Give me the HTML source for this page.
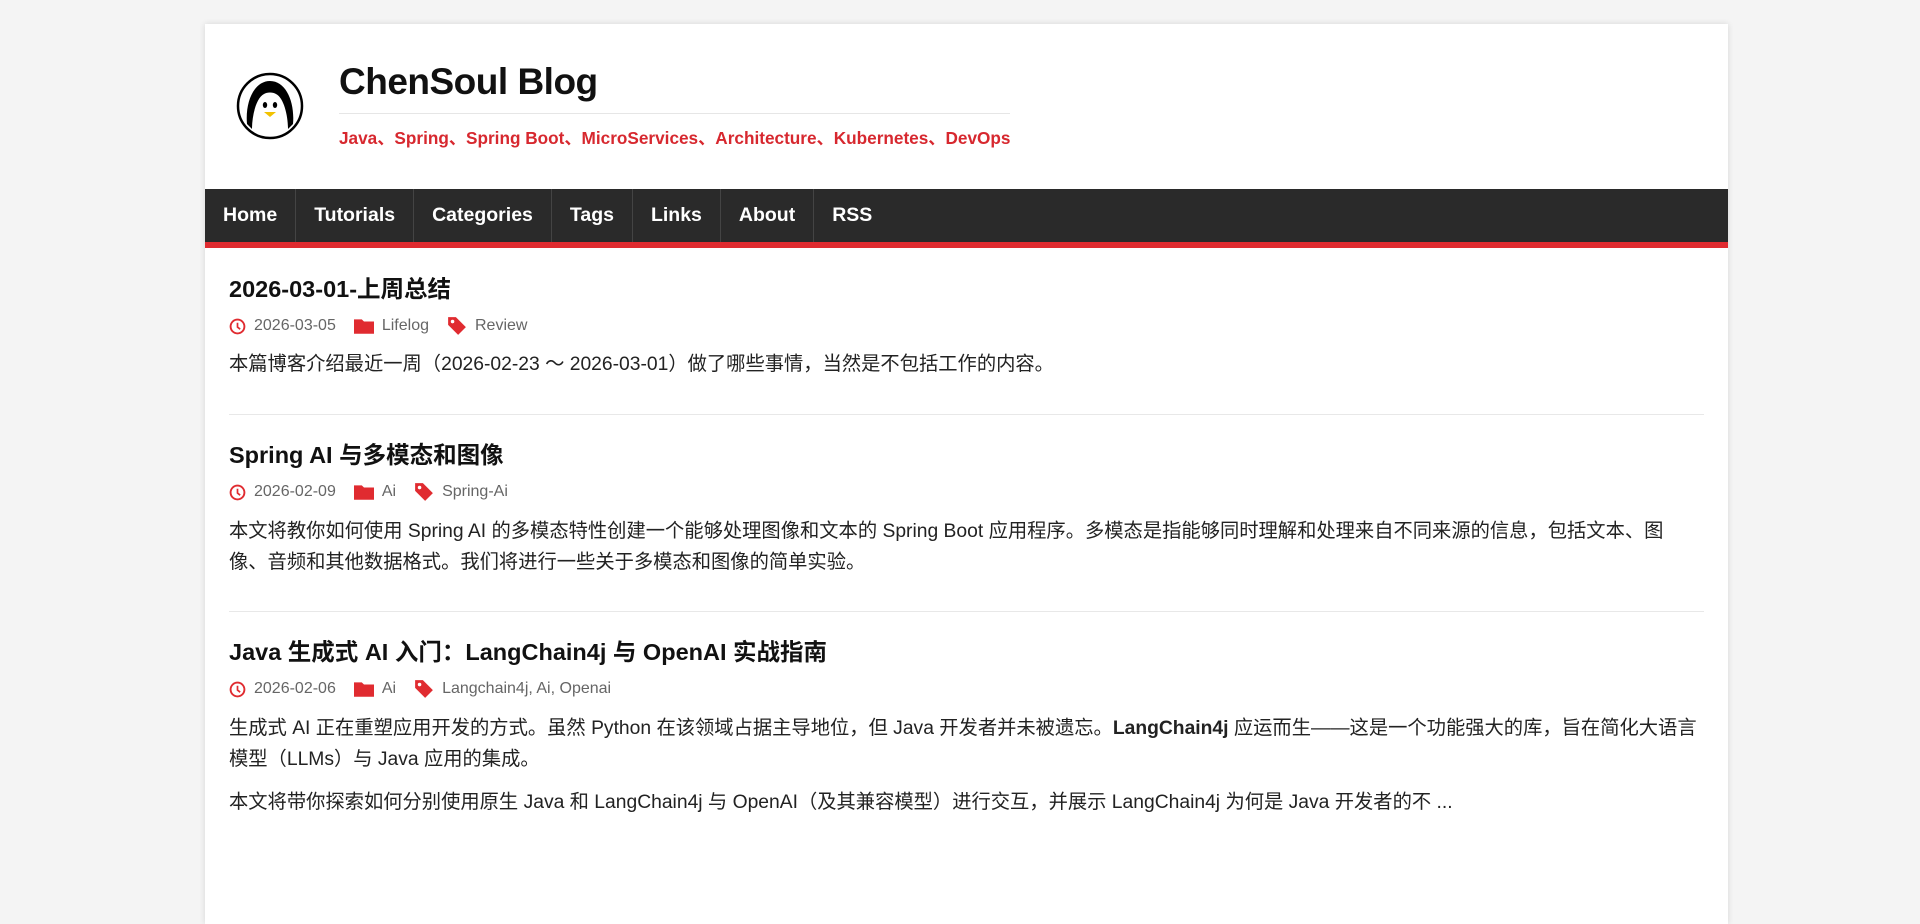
<!DOCTYPE html>
<html><head><meta charset="utf-8"><style>
*{margin:0;padding:0;box-sizing:border-box}
body{background:#f4f4f4;width:1920px;height:848px;overflow:hidden;font-family:"Liberation Sans","Noto Sans CJK SC",sans-serif;color:#111}
.wrap{position:absolute;left:205px;top:24px;width:1523px;height:900px;background:#fff;box-shadow:0 0 6px rgba(0,0,0,.12)}
.logo{position:absolute;left:236px;top:72px}
.title{position:absolute;left:339px;top:61px;font-size:37px;font-weight:bold;letter-spacing:-.5px;color:#111}
.hr{position:absolute;left:339px;top:113px;width:671px;height:1px;background:#e6e6e6}
.sub{position:absolute;left:339px;top:124px;font-size:17.2px;font-weight:bold;color:#d7282f}
.nav{position:absolute;left:205px;top:189px;width:1523px;height:53px;background:#2a2a2a;border-bottom:6px solid #e02b30;box-sizing:content-box;display:flex}
.nav a{color:#fff;font-weight:bold;font-size:19.5px;line-height:53px;padding:0 18px;border-right:1px solid #444;text-decoration:none}
.post{position:absolute;left:229px;width:1480px}
h2{font-size:23.5px;font-weight:bold;color:#111}
.meta{font-size:16px;color:#666;display:flex;align-items:center;margin-top:12px}
.meta svg{margin-right:8px}
.meta span{margin-right:18px}
p{font-size:19.3px;line-height:31px;color:#222;white-space:nowrap}
.line{position:absolute;left:229px;width:1475px;height:1px;background:#e8e8e8}
</style></head><body>
<div class="wrap"></div>
<svg class="logo" width="68" height="68" viewBox="0 0 68 68"><circle cx="34" cy="34" r="32" fill="#fff" stroke="#000" stroke-width="2.5"/>
<path d="M11 52 C9 30 18 9 34 9 C50 9 59 30 57 52 L52 57 C52 44 48 26 40 22 C37 20 31 20 28 22 C20 26 16 44 16 57Z" fill="#000"/>
<ellipse cx="29" cy="33" rx="2.2" ry="3" fill="#000"/><ellipse cx="39" cy="33" rx="2.2" ry="3" fill="#000"/>
<path d="M28 40 L40 40 L34 45Z" fill="#f2c200"/></svg>
<div class="title">ChenSoul Blog</div>
<div class="hr"></div>
<div class="sub">Java、Spring、Spring Boot、MicroServices、Architecture、Kubernetes、DevOps</div>
<div class="nav"><a>Home</a><a>Tutorials</a><a>Categories</a><a>Tags</a><a>Links</a><a>About</a><a style="border:none">RSS</a></div>

<svg width="0" height="0" style="position:absolute"><defs>
<symbol id="clk" viewBox="0 0 16 16"><circle cx="8" cy="8" r="6.5" fill="none" stroke="#e02b30" stroke-width="1.8"/><path d="M8 4.5V8.5L10.5 10.5" fill="none" stroke="#e02b30" stroke-width="1.6"/></symbol>
<symbol id="fld" viewBox="0 0 18 16"><path d="M0 2H7L9 4H18V15H0Z" fill="#e02b30"/></symbol>
<symbol id="tag" viewBox="0 0 18 18"><path d="M1 1H8L17 10L10 17L1 8Z" fill="#e02b30"/><circle cx="5" cy="5" r="1.6" fill="#fff"/></symbol>
</defs></svg>

<div class="post" style="top:270px"><h2>2026-03-01-上周总结</h2>
<div class="meta"><svg width="17" height="17"><use href="#clk"/></svg><span>2026-03-05</span><svg width="20" height="18"><use href="#fld"/></svg><span>Lifelog</span><svg width="20" height="20"><use href="#tag"/></svg><span>Review</span></div>
<p style="margin-top:13px">本篇博客介绍最近一周（2026-02-23 ～ 2026-03-01）做了哪些事情，当然是不包括工作的内容。</p></div>
<div class="line" style="top:414px"></div>

<div class="post" style="top:436px"><h2>Spring AI 与多模态和图像</h2>
<div class="meta"><svg width="17" height="17"><use href="#clk"/></svg><span>2026-02-09</span><svg width="20" height="18"><use href="#fld"/></svg><span>Ai</span><svg width="20" height="20"><use href="#tag"/></svg><span>Spring-Ai</span></div>
<p style="margin-top:14px">本文将教你如何使用 Spring AI 的多模态特性创建一个能够处理图像和文本的 Spring Boot 应用程序。多模态是指能够同时理解和处理来自不同来源的信息，包括文本、图<br>像、音频和其他数据格式。我们将进行一些关于多模态和图像的简单实验。</p></div>
<div class="line" style="top:611px"></div>

<div class="post" style="top:633px"><h2>Java 生成式 AI 入门：LangChain4j 与 OpenAI 实战指南</h2>
<div class="meta"><svg width="17" height="17"><use href="#clk"/></svg><span>2026-02-06</span><svg width="20" height="18"><use href="#fld"/></svg><span>Ai</span><svg width="20" height="20"><use href="#tag"/></svg><span>Langchain4j, Ai, Openai</span></div>
<p style="margin-top:14px">生成式 AI 正在重塑应用开发的方式。虽然 Python 在该领域占据主导地位，但 Java 开发者并未被遗忘。<b>LangChain4j</b> 应运而生——这是一个功能强大的库，旨在简化大语言<br>模型（LLMs）与 Java 应用的集成。</p>
<p style="margin-top:12px">本文将带你探索如何分别使用原生 Java 和 LangChain4j 与 OpenAI（及其兼容模型）进行交互，并展示 LangChain4j 为何是 Java 开发者的不 ...</p></div>
</body></html>
